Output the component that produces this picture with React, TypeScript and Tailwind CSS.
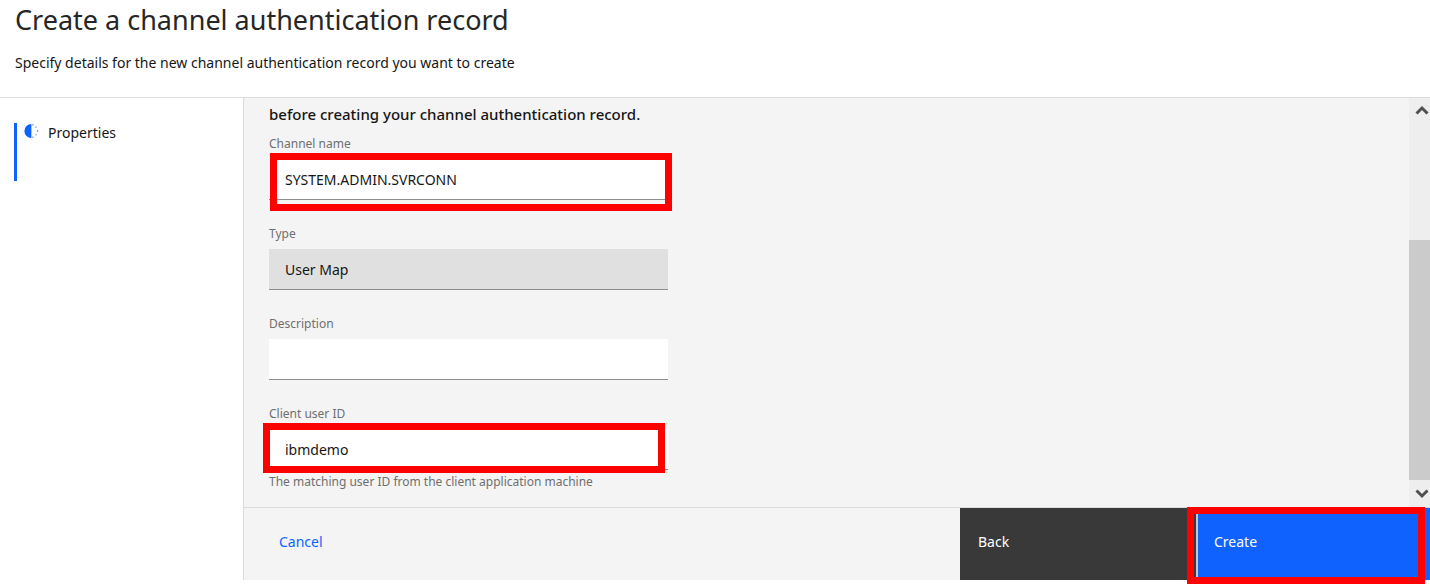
import type { ReactNode } from "react";

function Highlight({ className }: { className: string }) {
  return (
    <span
      aria-hidden="true"
      className={`pointer-events-none absolute z-10 border-7 border-[#ff0000] ${className}`}
    />
  );
}

interface FieldProps {
  id: string;
  label: string;
  value?: string;
  disabled?: boolean;
  children?: ReactNode;
}

function Field({ id, label, value = "", disabled = false, children }: FieldProps) {
  return (
    <div className="flex flex-col gap-1.5">
      <label htmlFor={id} className="text-xs leading-[18px] text-[#6f6f6f]">
        {label}
      </label>
      <div className="relative flex">
        <input
          id={id}
          type="text"
          defaultValue={value}
          disabled={disabled}
          className="h-[41px] w-full border-b border-[#8d8d8d] bg-white px-4 text-sm text-[#161616] outline-none disabled:bg-[#e0e0e0]"
        />
        {children}
      </div>
    </div>
  );
}

function ProgressIcon() {
  return (
    <svg viewBox="0 0 16 16" className="size-4 shrink-0 text-[#0f62fe]" aria-hidden="true">
      <path d="M8.4 1A7 7 0 0 0 8.4 15Z" fill="currentColor" />
      <path
        d="M9 1.8H10.6M9 14.2H10.6M13 3.4V5M14.6 7V9M13 11V12.6"
        fill="none"
        stroke="currentColor"
        strokeWidth="1.2"
        opacity="0.6"
      />
    </svg>
  );
}

function Chevron({ d }: { d: string }) {
  return (
    <svg viewBox="0 0 14 10" className="h-2.5 w-3.5" aria-hidden="true">
      <path d={d} fill="none" stroke="#505050" strokeWidth="3" />
    </svg>
  );
}

function ScrollBar() {
  return (
    <div className="flex w-[21px] shrink-0 flex-col bg-[#eeeeee]">
      <button type="button" aria-label="Scroll up" className="flex h-6 items-center justify-end pr-px">
        <Chevron d="M1.5 8.5 7 3l5.5 5.5" />
      </button>
      <div className="flex flex-1 flex-col">
        <div className="flex-[118]" />
        <div className="flex-[239] bg-[#cbcbcb]" />
      </div>
      <button type="button" aria-label="Scroll down" className="flex h-[27px] items-center justify-end pr-px">
        <Chevron d="M1.5 1.5 7 7l5.5-5.5" />
      </button>
    </div>
  );
}

export default function App() {
  return (
    <div className="min-h-screen bg-white font-['Noto_Sans',sans-serif] text-[#161616]">
      <header className="border-b border-[#dcdcdc] px-[15px] pt-1 pb-6">
        <h1 className="text-[27px] leading-8 text-[#262626]">Create a channel authentication record</h1>
        <p className="mt-[17px] text-sm leading-5">
          Specify details for the new channel authentication record you want to create
        </p>
      </header>

      <div className="flex">
        <nav className="w-[243px] shrink-0 pt-[25px] pl-3.5">
          <a
            href="#properties"
            className="flex h-[58px] items-start border-l-3 border-[#0f62fe] pl-1.5 text-sm leading-5"
          >
            <ProgressIcon />
            <span className="pl-[9px]">Properties</span>
          </a>
        </nav>

        <div className="flex min-w-0 flex-1 flex-col border-l border-[#dcdcdc] bg-[#f4f4f4]">
          <main className="flex">
            <div className="min-w-0 flex-1 px-[25px] pt-1 pb-[17px]">
              <p className="text-[15px] leading-6 font-medium">before creating your channel authentication record.</p>
              <form className="mt-[9px] flex max-w-[399px] flex-col gap-[25px]">
                <Field id="channel-name" label="Channel name" value="SYSTEM.ADMIN.SVRCONN">
                  <Highlight className="-top-1.5 -right-1 -bottom-[11px] left-px" />
                </Field>
                <Field id="type" label="Type" value="User Map" disabled />
                <Field id="description" label="Description" />
                <div className="flex flex-col gap-1">
                  <Field id="client-user-id" label="Client user ID" value="ibmdemo">
                    <Highlight className="-top-1.5 right-[3px] -bottom-[3px] -left-1.5" />
                  </Field>
                  <p className="text-xs leading-4 text-[#6f6f6f]">
                    The matching user ID from the client application machine
                  </p>
                </div>
              </form>
            </div>
            <ScrollBar />
          </main>

          <footer className="flex h-[73px] border-t border-[#dcdcdc] text-sm leading-5">
            <div className="flex-1">
              <button type="button" className="h-full px-[35px] pb-1 text-[#0f62fe]">
                Cancel
              </button>
            </div>
            <button type="button" className="w-[236px] bg-[#393939] px-[18px] pb-1 text-left text-white">
              Back
            </button>
            <div className="relative flex w-[234px]">
              <button
                type="button"
                className="flex-1 border-l-2 border-[#c6c6c6] bg-[#0f62fe] px-4 pb-1 text-left text-white"
              >
                Create
              </button>
              <Highlight className="-top-px right-[5px] -bottom-1 -left-[9px]" />
            </div>
          </footer>
        </div>
      </div>
    </div>
  );
}
